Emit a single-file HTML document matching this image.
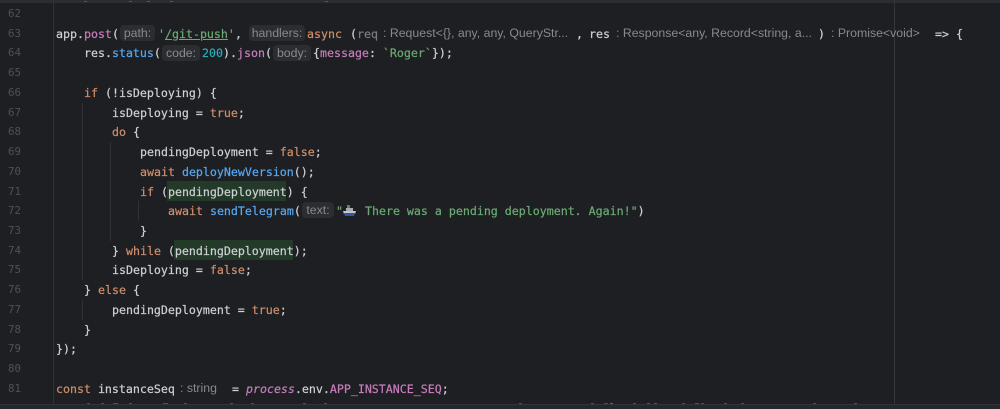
<!DOCTYPE html>
<html><head><meta charset="utf-8"><style>
html,body{margin:0;padding:0;background:#1e1f22;}
#r{position:relative;width:1000px;height:409px;overflow:hidden;background:#1e1f22;font-family:"DejaVu Sans Mono","Liberation Mono",monospace;font-size:11.62px;color:#ced0d6;}
.n,.s,.c,.h{position:absolute;white-space:pre;line-height:20px;height:20px;}
.s{-webkit-text-stroke:0.2px currentColor;}
.n{left:8px;color:#4e5157;font-size:10.8px;}
.c{font-family:"Liberation Sans",sans-serif;font-size:12.3px;color:#868a91;background:#2b2d30;border-radius:4px;height:16px;line-height:16px;text-align:center;}
.h{font-family:"Liberation Sans",sans-serif;font-size:12.3px;color:#868a91;}
.g{position:absolute;width:1px;background:#303236;}
.k{color:#cf8e6d}.f{color:#56a8f5}.t{color:#6aab73}.p{color:#c77dbb}.d{color:#2aacb8}
.m{position:absolute;background:#233a28;height:20px;}
.x{position:absolute;width:3px;height:1px;background:#77797d;opacity:.55;}
</style></head><body><div id="r">
<div style="position:absolute;left:0;top:0;width:1000px;height:3px;background:#2b2d30"></div>
<div style="position:absolute;left:0;top:404px;width:1000px;height:5px;background:#25272a"></div>
<div style="position:absolute;left:0;top:404px;width:1000px;height:1px;background:#313438"></div>
<div class="g" style="left:53px;top:0;height:404px"></div>
<div class="g" style="left:894px;top:0;height:404px;background:#34363a"></div>
<div class="g" style="left:82px;top:103px;height:177px"></div>
<div class="g" style="left:82px;top:300px;height:20px"></div>
<div class="g" style="left:110px;top:142px;height:99px"></div>
<div class="g" style="left:138px;top:201px;height:20px"></div>
<div class="m" style="left:167px;top:181px;width:119px"></div>
<div class="m" style="left:174px;top:240px;width:119px"></div>

<div class="x" style="left:84px;top:1px"></div><div class="x" style="left:129px;top:1px"></div><div class="x" style="left:147px;top:1px"></div><div class="x" style="left:170px;top:1px"></div><div class="x" style="left:325px;top:1px"></div>
<div class="x" style="left:87px;top:403px;background:#8a6a55"></div><div class="x" style="left:101px;top:403px"></div><div class="x" style="left:113px;top:403px;width:5px"></div><div class="x" style="left:129px;top:403px"></div><div class="x" style="left:163px;top:403px;width:5px"></div><div class="x" style="left:184px;top:403px"></div><div class="x" style="left:230px;top:403px"></div><div class="x" style="left:251px;top:403px"></div><div class="x" style="left:303px;top:403px"></div><div class="x" style="left:324px;top:403px"></div>
<div class="x" style="left:519px;top:403px"></div><div class="x" style="left:591px;top:403px"></div><div class="x" style="left:604px;top:403px;width:4px;background:#8a6a55"></div><div class="x" style="left:610px;top:403px;background:#cf8e6d"></div><div class="x" style="left:633px;top:403px"></div><div class="x" style="left:647px;top:403px"></div><div class="x" style="left:654px;top:403px"></div><div class="x" style="left:682px;top:403px"></div><div class="x" style="left:695px;top:403px;width:4px"></div><div class="x" style="left:701px;top:403px"></div><div class="x" style="left:724px;top:403px"></div><div class="x" style="left:741px;top:403px"></div><div class="x" style="left:813px;top:403px"></div><div class="x" style="left:854px;top:403px"></div>

<div class="n" style="top:4px">62</div>
<div class="n" style="top:23.7px">63</div>
<div class="n" style="top:43.4px">64</div>
<div class="n" style="top:63.2px">65</div>
<div class="n" style="top:82.9px">66</div>
<div class="n" style="top:102.6px">67</div>
<div class="n" style="top:122.3px">68</div>
<div class="n" style="top:142px">69</div>
<div class="n" style="top:161.8px">70</div>
<div class="n" style="top:181.5px">71</div>
<div class="n" style="top:201.2px">72</div>
<div class="n" style="top:220.9px">73</div>
<div class="n" style="top:240.6px">74</div>
<div class="n" style="top:260.4px">75</div>
<div class="n" style="top:280.1px">76</div>
<div class="n" style="top:299.8px">77</div>
<div class="n" style="top:319.5px">78</div>
<div class="n" style="top:339.2px">79</div>
<div class="n" style="top:359px">80</div>
<div class="n" style="top:378.7px">81</div>

<!-- 63 -->
<div class="s" style="left:56px;top:23.7px">app.<span class="p">post</span>(</div>
<div class="c" style="left:120px;top:25px;width:35px">path:</div>
<div class="s t" style="left:158px;top:23.7px">'<span style="text-decoration:underline">/git-push</span>'</div>
<div class="s" style="left:235px;top:23.7px">,</div>
<div class="c" style="left:249px;top:25px;width:56px">handlers:</div>
<div class="s k" style="left:307px;top:23.7px">async</div>
<div class="s" style="left:350px;top:23.7px">(</div>
<div class="s" style="left:357px;top:23.7px;color:#7a7e85">req</div>
<div class="h" style="left:383px;top:23px">: Request&lt;{}, any, any, QueryStr...</div>
<div class="s" style="left:576px;top:23.7px">,</div>
<div class="s" style="left:589px;top:23.7px">res</div>
<div class="h" style="left:616px;top:23px">: Response&lt;any, Record&lt;string, a...</div>
<div class="s" style="left:818px;top:23.7px">)</div>
<div class="h" style="left:831px;top:23px">: Promise&lt;void&gt;</div>
<div class="s" style="left:935px;top:23.7px">=&gt; {</div>

<!-- 64 -->
<div class="s" style="left:84px;top:43.4px">res.<span class="f">status</span>(</div>
<div class="c" style="left:162px;top:45px;width:38px">code:</div>
<div class="s d" style="left:202px;top:43.4px">200</div>
<div class="s" style="left:223px;top:43.4px">).<span class="p">json</span>(</div>
<div class="c" style="left:273px;top:45px;width:38px">body:</div>
<div class="s" style="left:313px;top:43.4px">{<span class="p">message</span>: <span class="t">`Roger`</span>});</div>

<div class="s" style="left:84px;top:82.9px"><span class="k">if</span> (!isDeploying) {</div>
<div class="s" style="left:112px;top:102.6px">isDeploying = <span class="k">true</span>;</div>
<div class="s" style="left:112px;top:122.3px"><span class="k">do</span> {</div>
<div class="s" style="left:140px;top:142px">pendingDeployment = <span class="k">false</span>;</div>
<div class="s" style="left:140px;top:161.8px"><span class="k">await</span> <span class="f">deployNewVersion</span>();</div>
<div class="s" style="left:140px;top:181.5px"><span class="k">if</span> (pendingDeployment) {</div>

<!-- 72 -->
<div class="s" style="left:168px;top:201.2px"><span class="k">await</span> <span class="f">sendTelegram</span>(</div>
<div class="c" style="left:302px;top:202px;width:32px">text:</div>
<div class="s t" style="left:336px;top:201.2px">"</div>
<svg style="position:absolute;left:343px;top:204px" width="13" height="13" viewBox="0 0 13 13"><rect x="4" y="1" width="3" height="3" fill="#6f747b"/><rect x="3" y="4" width="7" height="3" fill="#a9acb0"/><path d="M0 7h13l-1 3H1z" fill="#c4c6ca"/><path d="M1 9h11l-1 3H2z" fill="#2f56a8"/></svg>
<div class="s t" style="left:365px;top:201.2px">There was a pending deployment. Again!"<span style="color:#ced0d6">)</span></div>

<div class="s" style="left:140px;top:220.9px">}</div>
<div class="s" style="left:112px;top:240.6px">} <span class="k">while</span> (pendingDeployment);</div>
<div class="s" style="left:112px;top:260.4px">isDeploying = <span class="k">false</span>;</div>
<div class="s" style="left:84px;top:280.1px">} <span class="k">else</span> {</div>
<div class="s" style="left:112px;top:299.8px">pendingDeployment = <span class="k">true</span>;</div>
<div class="s" style="left:84px;top:319.5px">}</div>
<div class="s" style="left:56px;top:339.2px">});</div>

<!-- 81 -->
<div class="s" style="left:56px;top:378.7px"><span class="k">const</span> instanceSeq</div>
<div class="h" style="left:180px;top:378px">: string</div>
<div class="s" style="left:232px;top:378.7px">= <span class="p" style="font-style:italic">process</span>.env.<span class="p">APP_INSTANCE_SEQ</span>;</div>
</div></body></html>
